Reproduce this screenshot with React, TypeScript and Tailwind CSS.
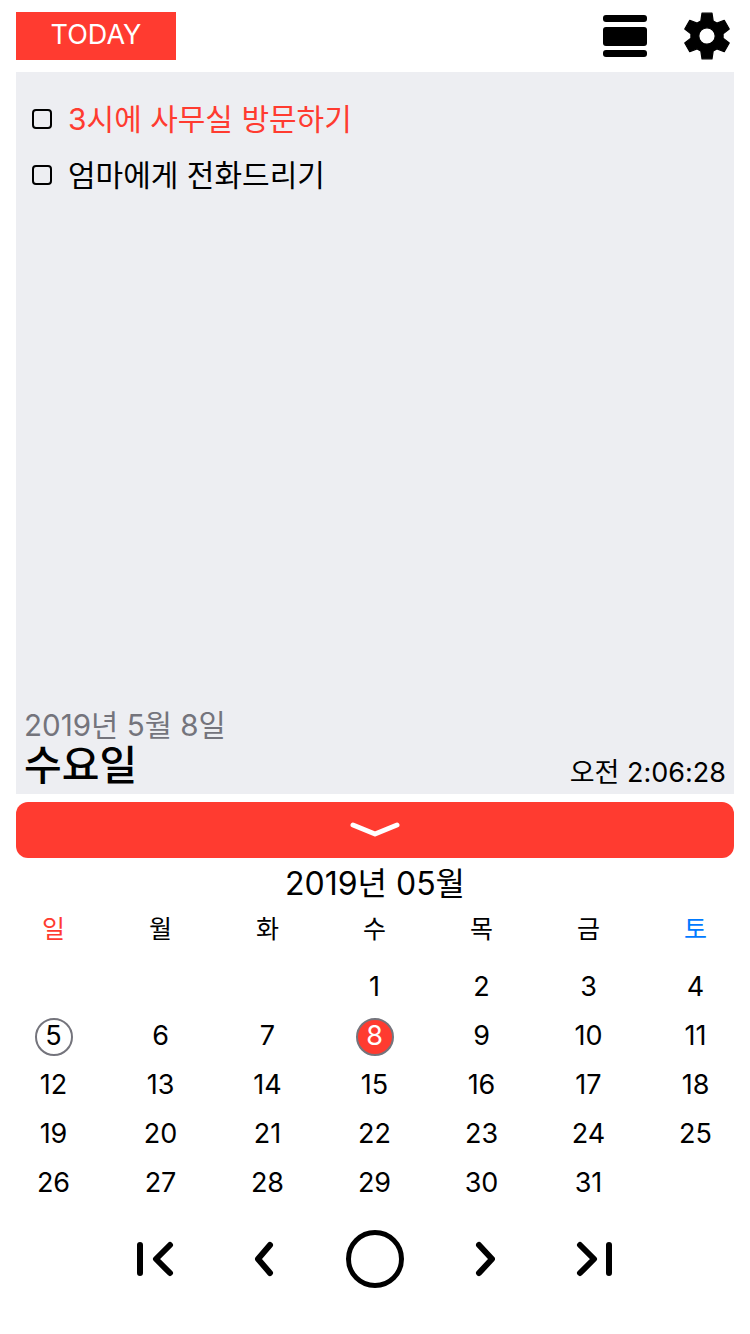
const FONT = "font-['Inter','Noto_Sans_CJK_KR',sans-serif]"

const weeks: (number | null)[][] = [
  [null, null, null, 1, 2, 3, 4],
  [5, 6, 7, 8, 9, 10, 11],
  [12, 13, 14, 15, 16, 17, 18],
  [19, 20, 21, 22, 23, 24, 25],
  [26, 27, 28, 29, 30, 31, null],
]

const days = ['일', '월', '화', '수', '목', '금', '토']

// six teeth around the centre of a 48 box, first tooth pointing up
function gearPath() {
  const toothShape = [
    [15, -6.2],
    [22.8, -5],
    [22.8, 5],
    [15, 6.2],
  ]
  const points: string[] = []
  for (let k = 0; k < 6; k++) {
    const a = (k * Math.PI) / 3
    for (const [r, v] of toothShape) {
      const x = 24 + r * Math.sin(a) + v * Math.cos(a)
      const y = 24 - r * Math.cos(a) + v * Math.sin(a)
      points.push(`${x.toFixed(2)} ${y.toFixed(2)}`)
    }
  }
  return `M${points.join('L')}Z M24 15.8a8.2 8.2 0 1 0 0 16.4a8.2 8.2 0 1 0 0-16.4Z`
}

function Todo({ text, red }: { text: string; red?: boolean }) {
  return (
    <div className="flex h-[56px] items-center">
      <div className="ml-[16px] h-[20px] w-[20px] rounded-[4px] border-2 border-black" />
      <span className={`ml-[16px] text-[30px] leading-none ${red ? 'text-[#ff3b30]' : 'text-black'}`}>{text}</span>
    </div>
  )
}

function NavIcon({ d, w = 40 }: { d: string; w?: number }) {
  return (
    <svg width={w} height={40} viewBox={`0 0 ${w} 40`} fill="none" stroke="black" strokeWidth="6" strokeLinecap="round" strokeLinejoin="round">
      <path d={d} />
    </svg>
  )
}

export default function App() {
  return (
    <div className={`${FONT} h-[1334px] w-[750px] overflow-hidden bg-white`}>
      <div className="flex h-[72px] items-start px-[16px] pt-[12px]">
        <div className="flex h-[48px] w-[160px] items-center justify-center bg-[#ff3b30] pb-[2px] text-[27px] text-white">TODAY</div>
        <div className="ml-auto flex items-center">
          <svg width="44" height="42" viewBox="0 0 44 42" fill="black" className="mr-[36px] mt-[-1px]">
            <rect x="0" y="0" width="44" height="7" rx="3" />
            <rect x="0" y="12" width="44" height="19" rx="3" />
            <rect x="0" y="35" width="44" height="7" rx="3" />
          </svg>
          <svg width="48" height="48" viewBox="0 0 48 48" fill="black" stroke="black" strokeWidth="1.2" strokeLinejoin="round" fillRule="evenodd" className="mr-[3px]">
            <path d={gearPath()} />
          </svg>
        </div>
      </div>

      <div className="mx-[16px] flex h-[722px] flex-col bg-[#edeef2]">
        <div className="pt-[19px]">
          <Todo text="3시에 사무실 방문하기" red />
          <Todo text="엄마에게 전화드리기" />
        </div>
        <div className="mt-auto flex items-end justify-between px-[8px] pb-[6px]">
          <div>
            <div className="text-[29.6px] leading-[34px] text-[#74747c]">2019년 5월 8일</div>
            <div className="text-[41px] font-medium leading-[46px] text-black">수요일</div>
          </div>
          <div className="text-[27px] leading-[30px] text-black">오전 2:06:28</div>
        </div>
      </div>

      <div className="mx-[16px] mt-[8px] flex h-[56px] items-center justify-center rounded-[12px] bg-[#ff3b30]">
        <svg width="50" height="18" viewBox="0 0 50 18" fill="none" stroke="white" strokeWidth="5" strokeLinecap="round" strokeLinejoin="round">
          <path d="M3 4L25 13L47 4" />
        </svg>
      </div>

      <div className="mt-[7px] text-center text-[32px] leading-[38px] text-black">2019년 05월</div>

      <div className="mt-[7px] grid h-[40px] grid-cols-7 items-center pr-[1px] text-center text-[25px]">
        {days.map((d, i) => (
          <div key={d} className={i === 0 ? 'text-[#ff3b30]' : i === 6 ? 'text-[#007aff]' : 'text-black'}>{d}</div>
        ))}
      </div>

      <div className="mt-[13px]">
        {weeks.map((week, r) => (
          <div key={r} className="grid h-[49px] grid-cols-7 items-center pr-[1px] text-center text-[27px] text-black">
            {week.map((n, i) => (
              <div key={i} className="flex justify-center">
                {n === 5 && <span className="flex h-[38px] w-[38px] items-center justify-center rounded-full border-2 border-[#74747c]">5</span>}
                {n === 8 && <span className="flex h-[38px] w-[38px] items-center justify-center rounded-full border-2 border-[#74747c] bg-[#ff3b30] text-white">8</span>}
                {n !== 5 && n !== 8 && n}
              </div>
            ))}
          </div>
        ))}
      </div>

      <div className="mt-[22px] flex items-center justify-center">
        <NavIcon d="M5 6V34M35 6L21 20L35 34" />
        <div className="w-[79px]" />
        <NavIcon w={20} d="M16 6L4 20L16 34" />
        <div className="w-[72px]" />
        <div className="h-[58px] w-[58px] rounded-full border-[5px] border-black" />
        <div className="w-[71px]" />
        <NavIcon w={20} d="M4 6L17 20L4 34" />
        <div className="w-[80px]" />
        <NavIcon d="M5 6L19 20L5 34M34 6V34" />
      </div>
    </div>
  )
}
